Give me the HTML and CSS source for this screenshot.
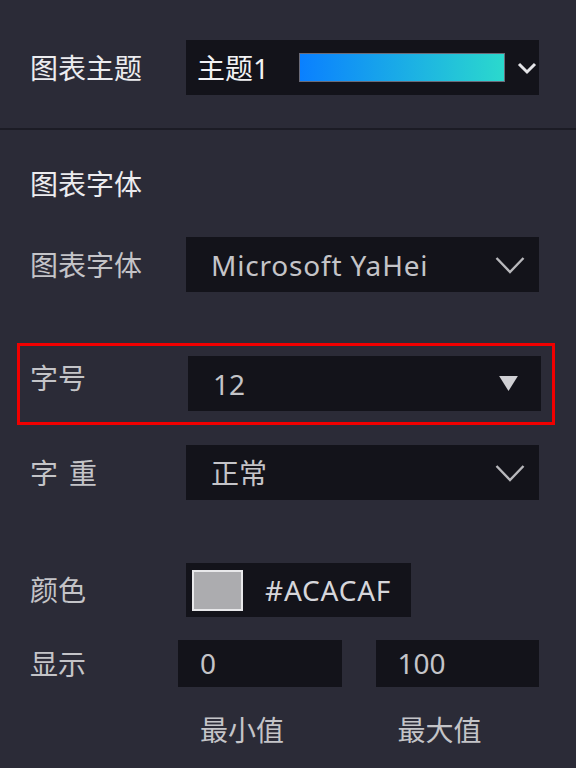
FILE: index.html
```html
<!DOCTYPE html>
<html>
<head>
  <meta charset="UTF-8">
  <meta name="viewport" content="width=device-width, initial-scale=1.0">
  <title>图表设置</title>
  <link rel="stylesheet" href="styles.css">
</head>
<body>
  <div class="section top">
    <div class="row">
      <span class="label title">图表主题</span>
      <div class="select theme">
        <span class="value bright">主题1</span>
        <span class="ramp"></span>
        <svg class="chev small" viewBox="0 0 20 14"><path d="M2 3 L10 11 L18 3" /></svg>
      </div>
    </div>
  </div>

  <div class="divider"></div>

  <div class="section">
    <div class="heading">图表字体</div>

    <div class="row font-row">
      <span class="label">图表字体</span>
      <div class="select">
        <span class="value latin">Microsoft YaHei</span>
        <svg class="chev" viewBox="0 0 30 18"><path d="M1.5 2 L15 16 L28.5 2" /></svg>
      </div>
    </div>

    <!-- highlighted field -->
    <div class="mark">
      <div class="row size-row">
        <span class="label">字号</span>
        <div class="select">
          <span class="value">12</span>
          <svg class="tri" viewBox="0 0 20 16"><path d="M0 0 H20 L10 16 Z" /></svg>
        </div>
      </div>
    </div>

    <div class="row weight-row">
      <span class="label spaced">字重</span>
      <div class="select">
        <span class="value">正常</span>
        <svg class="chev" viewBox="0 0 30 18"><path d="M1.5 2 L15 16 L28.5 2" /></svg>
      </div>
    </div>

    <div class="row color-row">
      <span class="label">颜色</span>
      <div class="color-box">
        <span class="swatch"></span>
        <span class="value latin">#ACACAF</span>
      </div>
    </div>

    <div class="row range-row">
      <span class="label narrow">显示</span>
      <div class="range">
        <div class="input">0</div>
        <div class="input">100</div>
      </div>
    </div>

    <div class="row captions">
      <span class="label narrow"></span>
      <div class="range">
        <span class="cap">最小值</span>
        <span class="cap">最大值</span>
      </div>
    </div>
  </div>
</body>
</html>
```

FILE: styles.css
```css
body {
  margin: 0;
  background-color: #2b2b37;
  font-family: "Noto Sans", "Noto Sans CJK SC", sans-serif;
  font-size: 28px;
  color: #c4c4c8;
  width: 576px;
  height: 768px;
  overflow: hidden;
}
.section {
  padding: 0 37px 0 30px;
}
.top {
  padding-top: 40px;
  padding-bottom: 33px;
}
.divider {
  height: 2px;
  background-color: #1c1c25;
}
.row {
  display: flex;
  align-items: center;
}
.label {
  width: 156px;
  flex: none;
  line-height: 28px;
}
.label.title {
  color: #ececef;
}
.label.spaced {
  letter-spacing: 11px;
}
.label.narrow {
  width: 148px;
}
.heading {
  margin-top: 40px;
  line-height: 28px;
  color: #ececef;
}
.select {
  flex: 1;
  height: 55px;
  background-color: #13131a;
  display: flex;
  align-items: center;
  padding: 0 14px 0 25px;
  box-sizing: border-box;
}
.value {
  line-height: 28px;
  white-space: nowrap;
}
.latin {
  letter-spacing: 0.8px;
}
.bright {
  color: #f2f2f4;
}
.theme {
  padding-left: 11px;
  padding-right: 2px;
}
.ramp {
  width: 204px;
  height: 27px;
  margin-left: 30px;
  border: 1px solid #6b6b78;
  background: linear-gradient(to right, #0a80ff, #2bd9cd);
}
.chev {
  margin-left: auto;
  width: 30px;
  height: 18px;
  fill: none;
  stroke: #b8b8bc;
  stroke-width: 2.4;
}
.chev.small {
  width: 20px;
  height: 14px;
  stroke: #e4e4e8;
  stroke-width: 3;
}
.tri {
  margin-left: auto;
  margin-right: 9px;
  width: 19px;
  height: 15px;
  fill: #d0d0d4;
}
.font-row {
  margin-top: 39px;
}
.mark {
  margin: 51px -16px 0 -13px;
  border: 3px solid #f00000;
  padding: 10px 11px 11px 10px;
}
.size-row {
  align-items: flex-start;
}
.size-row .label {
  margin-top: 8px;
}
.size-row .select {
  margin-left: 2px;
}
.weight-row {
  margin-top: 20px;
}
.color-row {
  margin-top: 63px;
}
.color-box {
  width: 225px;
  height: 54px;
  background-color: #13131a;
  display: flex;
  align-items: center;
  padding-left: 6px;
  box-sizing: border-box;
  color: #d6d6da;
}
.swatch {
  width: 47px;
  height: 37px;
  border: 2px solid #e8e8ea;
  background-color: #acacaf;
  margin-right: 22px;
}
.range-row {
  margin-top: 23px;
}
.range {
  flex: 1;
  display: flex;
  gap: 34px;
}
.input {
  flex: 1;
  height: 47px;
  background-color: #13131a;
  padding-left: 22px;
  line-height: 47px;
}
.captions {
  margin-top: 29px;
  line-height: 28px;
}
.cap {
  flex: 1;
  padding-left: 22px;
}
```
